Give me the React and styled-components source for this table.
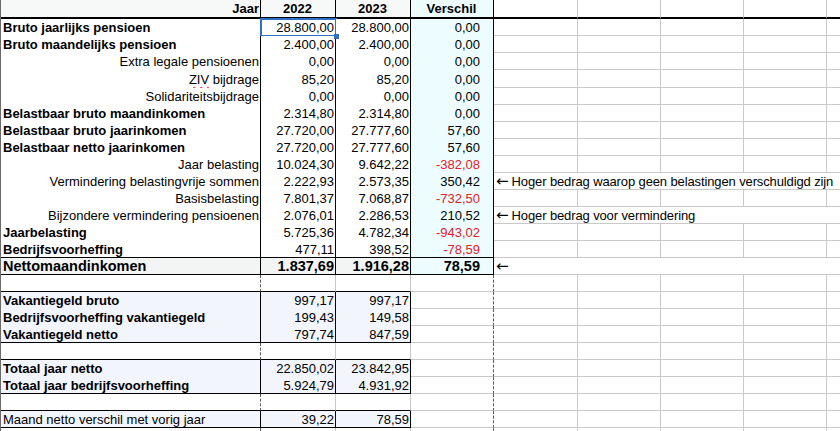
import React from 'react';
import styled, { createGlobalStyle } from 'styled-components';

const Global = createGlobalStyle`
  html, body { margin: 0; padding: 0; background: #fff; }
  body { font-family: "Liberation Sans", Arial, sans-serif; overflow: hidden; }
`;

const EDGE = {
  black: '1px solid #000',
  gray: '1px solid #c9c9c9',
  dashed: '1px dashed #5c5c5c',
  thick: '2px solid #000',
  none: 'none',
};

const FILL = {
  white: '#ffffff',
  head: '#f7f8f8',
  total: '#f3f4f4',
  diff: '#edfcfe',
  box: '#f3f5fc',
};

const Sheet = styled.div`
  box-sizing: border-box;
  display: grid;
  grid-template-columns: 260px 75px 75px 83px 84px 83px 83px 83px 1fr;
  grid-template-rows: 19px 17px 17px 17px 18px repeat(21, 17px);
  width: 840px;
  height: 431px;
  overflow: hidden;
  border-left: 1px solid #6a6a6a;
  color: #000;
  font-size: 13px;
`;

const Cell = styled.div`
  box-sizing: border-box;
  position: relative;
  display: flex;
  align-items: center;
  min-width: 0;
  white-space: nowrap;
  line-height: 1;
  background: ${(p) => FILL[p.$fill || 'white']};
  border-right: ${(p) => EDGE[p.$right || 'gray']};
  border-bottom: ${(p) => EDGE[p.$bottom || 'gray']};
  grid-column: span ${(p) => p.$span || 1};
`;

const LabelCell = styled(Cell)`
  justify-content: ${(p) => (p.$bold || p.$left ? 'flex-start' : 'flex-end')};
  padding: 0 1px 0 2px;
  font-weight: ${(p) => (p.$bold ? 700 : 400)};
  font-size: ${(p) => (p.$big ? '14.5px' : '13px')};
`;

const HeadCell = styled(Cell)`
  justify-content: ${(p) => (p.$end ? 'flex-end' : 'center')};
  padding: 0 1px 0 0;
  font-weight: 700;
`;

const NumCell = styled(Cell)`
  justify-content: flex-end;
  padding: 0 ${(p) => (p.$diff ? 13 : 1)}px 0 0;
  font-weight: ${(p) => (p.$big ? 700 : 400)};
  font-size: ${(p) => (p.$big ? '14.5px' : '13px')};
  color: ${(p) => (p.$neg ? '#e3202a' : '#000')};

  ${(p) =>
    p.$selected &&
    `
    &::after {
      content: '';
      position: absolute;
      left: -1px;
      top: -1px;
      right: -2px;
      bottom: -1px;
      border: 2px solid #2f6fc6;
    }
    &::before {
      content: '';
      position: absolute;
      right: -4px;
      bottom: -3px;
      width: 5px;
      height: 5px;
      background: #2f6fc6;
      z-index: 1;
    }
  `}
`;

const NoteCell = styled(Cell)`
  grid-column: span 5;
  justify-content: flex-start;
  padding-left: 2px;
  border-right: none;
  letter-spacing: -0.12px;
`;

const Arrow = styled.span`
  font-family: "DejaVu Sans", "Liberation Sans", sans-serif;
  font-size: 15px;
  font-weight: 400;
  letter-spacing: 0;
  margin-right: 3px;
`;

const Spell = styled.span`
  text-decoration: underline wavy #e0393e;
  text-decoration-thickness: 1px;
  text-underline-offset: 2px;
  text-decoration-skip-ink: none;
`;

const topRows = [
  { label: 'Bruto jaarlijks pensioen', bold: true, b: '28.800,00', c: '28.800,00', d: '0,00', selected: true },
  { label: 'Bruto maandelijks pensioen', bold: true, b: '2.400,00', c: '2.400,00', d: '0,00' },
  { label: 'Extra legale pensioenen', b: '0,00', c: '0,00', d: '0,00' },
  { label: 'ZIV', spellRest: ' bijdrage', b: '85,20', c: '85,20', d: '0,00' },
  { label: 'Solidariteitsbijdrage', b: '0,00', c: '0,00', d: '0,00' },
  { label: 'Belastbaar bruto maandinkomen', bold: true, b: '2.314,80', c: '2.314,80', d: '0,00' },
  { label: 'Belastbaar bruto jaarinkomen', bold: true, b: '27.720,00', c: '27.777,60', d: '57,60' },
  { label: 'Belastbaar netto jaarinkomen', bold: true, b: '27.720,00', c: '27.777,60', d: '57,60' },
  { label: 'Jaar belasting', b: '10.024,30', c: '9.642,22', d: '-382,08' },
  { label: 'Vermindering belastingvrije sommen', b: '2.222,93', c: '2.573,35', d: '350,42', note: 'Hoger bedrag waarop geen belastingen verschuldigd zijn' },
  { label: 'Basisbelasting', b: '7.801,37', c: '7.068,87', d: '-732,50' },
  { label: 'Bijzondere vermindering pensioenen', b: '2.076,01', c: '2.286,53', d: '210,52', note: 'Hoger bedrag voor vermindering' },
  { label: 'Jaarbelasting', bold: true, b: '5.725,36', c: '4.782,34', d: '-943,02' },
  { label: 'Bedrijfsvoorheffing', bold: true, b: '477,11', c: '398,52', d: '-78,59' },
];

const bottomRows = [
  { blank: true },
  { label: 'Vakantiegeld bruto', bold: true, b: '997,17', c: '997,17' },
  { label: 'Bedrijfsvoorheffing vakantiegeld', bold: true, b: '199,43', c: '149,58' },
  { label: 'Vakantiegeld netto', bold: true, b: '797,74', c: '847,59', last: true },
  { blank: true },
  { label: 'Totaal jaar netto', bold: true, b: '22.850,02', c: '23.842,95' },
  { label: 'Totaal jaar bedrijfsvoorheffing', bold: true, b: '5.924,79', c: '4.931,92', last: true },
  { blank: true },
  { label: 'Maand netto verschil met vorig jaar', left: true, b: '39,22', c: '78,59', last: true },
  { blank: true, end: true },
];

function GridTail() {
  return (
    <>
      <Cell />
      <Cell />
      <Cell />
      <Cell />
      <Cell $right="none" />
    </>
  );
}

export default function App() {
  return (
    <>
      <Global />
      <Sheet>
        <HeadCell $fill="head" $right="black" $bottom="thick" $end>Jaar</HeadCell>
        <HeadCell $fill="head" $right="black" $bottom="thick">2022</HeadCell>
        <HeadCell $fill="head" $right="black" $bottom="thick">2023</HeadCell>
        <HeadCell $fill="diff" $right="black" $bottom="thick">Verschil</HeadCell>
        <Cell $bottom="thick" />
        <Cell $bottom="thick" />
        <Cell $bottom="thick" />
        <Cell $bottom="thick" />
        <Cell $bottom="thick" $right="none" />

        {topRows.map((r, i) => {
          const bottom = i === topRows.length - 1 ? 'black' : 'none';
          return (
            <React.Fragment key={`t${i}`}>
              <LabelCell $bold={r.bold} $right="black" $bottom={bottom}>
                {r.spellRest ? (
                  <span>
                    <Spell>{r.label}</Spell>
                    {r.spellRest}
                  </span>
                ) : (
                  r.label
                )}
              </LabelCell>
              <NumCell $right="black" $bottom={bottom} $selected={r.selected}>{r.b}</NumCell>
              <NumCell $right="black" $bottom={bottom}>{r.c}</NumCell>
              <NumCell $diff $fill="diff" $right="black" $bottom={bottom} $neg={r.d.startsWith('-')}>
                {r.d}
              </NumCell>
              {r.note ? (
                <NoteCell>
                  <Arrow>←</Arrow>
                  {r.note}
                </NoteCell>
              ) : (
                <GridTail />
              )}
            </React.Fragment>
          );
        })}

        <LabelCell $bold $big $fill="total" $right="black" $bottom="black">Nettomaandinkomen</LabelCell>
        <NumCell $big $fill="total" $right="black" $bottom="black">1.837,69</NumCell>
        <NumCell $big $fill="total" $right="black" $bottom="black">1.916,28</NumCell>
        <NumCell $big $diff $fill="diff" $right="black" $bottom="black">78,59</NumCell>
        <NoteCell>
          <Arrow>←</Arrow>
        </NoteCell>

        {bottomRows.map((r, i) => {
          if (r.blank) {
            const b = r.end ? 'none' : 'black';
            return (
              <React.Fragment key={`b${i}`}>
                <Cell $right="dashed" $bottom={b} />
                <Cell $right="gray" $bottom={b} />
                <Cell $right="gray" $bottom={b} />
                <Cell $right="dashed" />
                <GridTail />
              </React.Fragment>
            );
          }
          const bottom = r.last ? 'black' : 'none';
          return (
            <React.Fragment key={`b${i}`}>
              <LabelCell $bold={r.bold} $left={r.left} $fill="box" $right="black" $bottom={bottom}>
                {r.label}
              </LabelCell>
              <NumCell $fill="box" $right="black" $bottom={bottom}>{r.b}</NumCell>
              <NumCell $fill="box" $right="black" $bottom={bottom}>{r.c}</NumCell>
              <Cell $right="dashed" />
              <GridTail />
            </React.Fragment>
          );
        })}
      </Sheet>
    </>
  );
}
